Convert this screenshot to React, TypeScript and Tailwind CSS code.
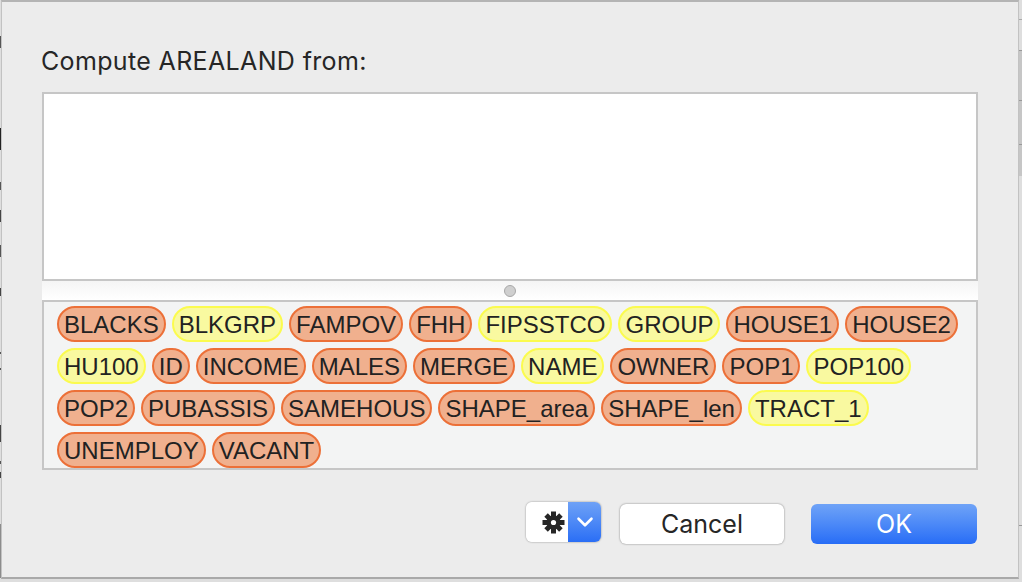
import { ChevronDown } from "lucide-react";

const fields = [
  { name: "BLACKS", kind: "num" },
  { name: "BLKGRP", kind: "str" },
  { name: "FAMPOV", kind: "num" },
  { name: "FHH", kind: "num" },
  { name: "FIPSSTCO", kind: "str" },
  { name: "GROUP", kind: "str" },
  { name: "HOUSE1", kind: "num" },
  { name: "HOUSE2", kind: "num" },
  { name: "HU100", kind: "str" },
  { name: "ID", kind: "num" },
  { name: "INCOME", kind: "num" },
  { name: "MALES", kind: "num" },
  { name: "MERGE", kind: "num" },
  { name: "NAME", kind: "str" },
  { name: "OWNER", kind: "num" },
  { name: "POP1", kind: "num" },
  { name: "POP100", kind: "str" },
  { name: "POP2", kind: "num" },
  { name: "PUBASSIS", kind: "num" },
  { name: "SAMEHOUS", kind: "num" },
  { name: "SHAPE_area", kind: "num" },
  { name: "SHAPE_len", kind: "num" },
  { name: "TRACT_1", kind: "str" },
  { name: "UNEMPLOY", kind: "num" },
  { name: "VACANT", kind: "num" },
];

// bits of the window behind the dialog, showing along its edges
const leftEdge = [
  "h-[36px]",
  "h-[12px] bg-[#555]",
  "h-[80px]",
  "h-[22px] bg-[#222]",
  "h-[32px]",
  "h-[8px] bg-[#555]",
  "h-[20px]",
  "h-[12px] bg-[#444]",
  "h-[23px]",
  "h-[12px] bg-[#555]",
  "h-[31px]",
  "h-[8px] bg-[#444]",
  "h-[56px]",
  "h-[2px] bg-[#555]",
  "h-[14px]",
  "h-[2px] bg-[#555]",
  "h-[55px]",
  "h-[17px] bg-[#444]",
  "h-[19px]",
  "h-[3px] bg-[#555]",
  "h-[8px]",
  "h-[6px] bg-[#444]",
  "h-[46px]",
  "h-[54px] bg-[#8c8c8c]",
];

const rightEdge = [
  "h-[19px]",
  "h-[1px] bg-[#aaa]",
  "h-[30px]",
  "h-[1px] bg-[#999]",
  "h-[49px] bg-[#c6c6c6]",
  "h-[1px] bg-[#999]",
  "h-[43px] bg-[#c6c6c6]",
  "h-[1px] bg-[#999]",
  "h-[31px] bg-[#c6c6c6]",
  "h-[349px]",
  "h-[1px] bg-[#999]",
];

function Chip({ name, kind }: { name: string; kind: string }) {
  return (
    <div
      className={
        kind === "str"
          ? "h-[36px] rounded-[18px] border-2 border-[#fbfb4e] bg-[#f9f9a0] px-[5px] text-[24px] leading-[34px] text-[#222]"
          : "h-[36px] rounded-[18px] border-2 border-[#ec7038] bg-[#f0b08e] px-[5px] text-[24px] leading-[34px] text-[#222]"
      }
    >
      {name}
    </div>
  );
}

function Gear() {
  return (
    <svg width="23" height="23" viewBox="0 0 23 23" fill="#262626">
      <rect x="9" y="0.5" width="5" height="22" />
      <rect x="0.5" y="9" width="22" height="5" />
      <rect x="9" y="1" width="5" height="21" transform="rotate(45 11.5 11.5)" />
      <rect x="9" y="1" width="5" height="21" transform="rotate(-45 11.5 11.5)" />
      <circle cx="11.5" cy="11.5" r="7" />
      <circle cx="11.5" cy="11.5" r="2.6" fill="#fff" />
    </svg>
  );
}

export default function App() {
  return (
    <div className="flex h-[582px] w-[1022px] overflow-hidden bg-[#dedede] font-['Liberation_Sans',sans-serif]">
      <div className="flex w-[1px] flex-col">
        {leftEdge.map((c, i) => (
          <div key={i} className={c} />
        ))}
      </div>
      <div className="h-[579px] w-[1018px] border-t-2 border-b-2 border-l-1 border-r-1 border-t-[#b4b4b4] border-b-[#a9a9a9] border-l-[#c2c2c2] border-r-[#c2c2c2] bg-[#ececec] pl-[40px] pt-[41px]">
        <div className="-ml-[1px] h-[49px] font-['Inter',sans-serif] text-[25px] leading-[36px] tracking-[0.35px] text-[#262626]">
          Compute AREALAND from:
        </div>
        <div className="h-[189px] w-[936px] border-2 border-[#c6c6c6] bg-white" />
        <div className="flex h-[19px] w-[936px] items-center justify-center bg-gradient-to-b from-[#f5f5f5] to-white">
          <div className="h-[12px] w-[12px] rounded-full border border-[#a8a8a8] bg-[#cfcfcf]" />
        </div>
        <div className="flex h-[170px] w-[936px] flex-wrap content-start gap-[6px] border-2 border-[#c6c6c6] bg-[#f3f4f4] pl-[13px] pr-[13px] pt-[4px]">
          {fields.map((f) => (
            <Chip key={f.name} name={f.name} kind={f.kind} />
          ))}
        </div>
        <div className="mt-[32px] flex w-[935px] items-start justify-end">
          <div className="flex h-[40px] w-[75px] overflow-hidden rounded-[6px] shadow-[0_0_2px_rgba(0,0,0,0.45)]">
            <div className="flex w-[42px] items-center justify-center bg-white pl-[12px]">
              <Gear />
            </div>
            <div className="flex w-[33px] items-start justify-center bg-gradient-to-b from-[#6ea1f6] to-[#2a6ef5] pt-[7px] text-white">
              <ChevronDown size={26} strokeWidth={2.4} />
            </div>
          </div>
          <button className="ml-[19px] mt-[2px] h-[40px] w-[164px] rounded-[6px] bg-white pt-[2px] font-['Inter',sans-serif] text-[25px] text-[#262626] shadow-[0_0_2px_rgba(0,0,0,0.5)]">
            Cancel
          </button>
          <button className="ml-[27px] mt-[2px] h-[40px] w-[166px] rounded-[6px] bg-gradient-to-b from-[#6fa3f7] to-[#276cf6] pt-[2px] font-['Inter',sans-serif] text-[25px] text-white">
            OK
          </button>
        </div>
      </div>
      <div className="flex w-[3px] flex-col">
        {rightEdge.map((c, i) => (
          <div key={i} className={c} />
        ))}
      </div>
    </div>
  );
}
